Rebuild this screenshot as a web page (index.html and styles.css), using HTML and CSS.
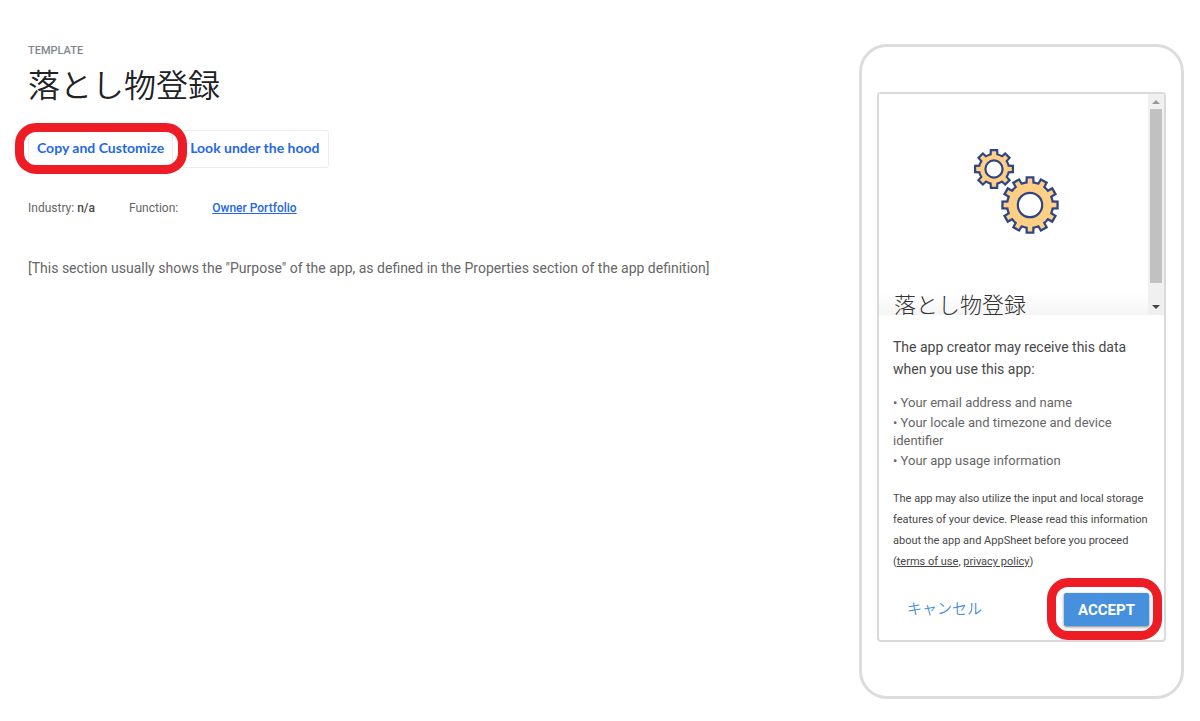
FILE: index.html
```html
<!DOCTYPE html>
<html lang="en">
<head>
<meta charset="utf-8">
<title>落とし物登録</title>
<link rel="stylesheet" href="styles.css">
</head>
<body>
<div class="page">
  <main class="details">
    <p class="eyebrow">TEMPLATE</p>
    <h1 class="title" lang="ja">落とし物登録</h1>
    <div class="actions">
      <button class="action marked" type="button">Copy and Customize</button>
      <button class="action" type="button">Look under the hood</button>
    </div>
    <div class="meta">
      <span>Industry: <b>n/a</b></span>
      <span>Function:</span>
      <a href="#portfolio">Owner Portfolio</a>
    </div>
    <p class="purpose">[This section usually shows the "Purpose" of the app, as defined in the Properties section of the app definition]</p>
  </main>

  <aside class="phone">
    <div class="screen">
      <div class="preview">
        <div class="preview-body">
          <svg class="gears" viewBox="0 0 86 88" width="86" height="88" aria-hidden="true">
            <defs>
              <path id="so" d="M-5 0L-4.2-20H4.2L5 0L4.2 20H-4.2Z"/>
              <path id="si" d="M-3 0L-2.1-17.8H2.1L3 0L2.1 17.8H-2.1Z"/>
              <path id="lo" d="M-5 0L-4.4-28.7H4.4L5 0L4.4 28.7H-4.4Z"/>
              <path id="li" d="M-3 0L-2.2-26.4H2.2L3 0L2.2 26.4H-2.2Z"/>
            </defs>
            <g transform="translate(21 21)">
              <g class="edge"><circle r="16"/><use href="#so"/><use href="#so" transform="rotate(45)"/><use href="#so" transform="rotate(90)"/><use href="#so" transform="rotate(135)"/></g>
              <g class="fill"><circle r="13.9"/><use href="#si"/><use href="#si" transform="rotate(45)"/><use href="#si" transform="rotate(90)"/><use href="#si" transform="rotate(135)"/></g>
              <circle class="hole" r="8.6"/>
            </g>
            <g transform="translate(57 57)">
              <g class="edge"><circle r="24"/><use href="#lo"/><use href="#lo" transform="rotate(30)"/><use href="#lo" transform="rotate(60)"/><use href="#lo" transform="rotate(90)"/><use href="#lo" transform="rotate(120)"/><use href="#lo" transform="rotate(150)"/></g>
              <g class="fill"><circle r="21.8"/><use href="#li"/><use href="#li" transform="rotate(30)"/><use href="#li" transform="rotate(60)"/><use href="#li" transform="rotate(90)"/><use href="#li" transform="rotate(120)"/><use href="#li" transform="rotate(150)"/></g>
              <circle class="hole" r="12.2"/>
            </g>
          </svg>
          <h2 class="app-name" lang="ja">落とし物登録</h2>
        </div>
        <div class="scrollbar" aria-hidden="true">
          <svg class="arrow up" viewBox="0 0 8 4" width="8" height="4"><path d="M4 0L8 4H0Z"/></svg>
          <div class="thumb"></div>
          <svg class="arrow" viewBox="0 0 8 4" width="8" height="4"><path d="M0 0H8L4 4Z"/></svg>
        </div>
      </div>
      <section class="consent">
        <p class="lead">The app creator may receive this data when you use this app:</p>
        <div class="data-list">
          <p>• Your email address and name</p>
          <p>• Your locale and timezone and device identifier</p>
          <p>• Your app usage information</p>
        </div>
        <p class="notice">The app may also utilize the input and local storage features of your device. Please read this information about the app and AppSheet before you proceed (<a href="#terms">terms of use</a>, <a href="#privacy">privacy policy</a>)</p>
        <div class="choices">
          <button class="cancel" type="button" lang="ja">キャンセル</button>
          <button class="accept marked" type="button">ACCEPT</button>
        </div>
      </section>
    </div>
  </aside>
</div>
</body>
</html>
```

FILE: styles.css
```css
* {
  box-sizing: border-box;
}

body {
  margin: 0;
  background: #fff;
  color: #666;
  font-family: Roboto, "Noto Sans CJK JP", sans-serif;
}

p, h1, h2 {
  margin: 0;
}

button {
  font-family: inherit;
  cursor: pointer;
}

.page {
  display: flex;
  align-items: flex-start;
  gap: 24px;
  padding: 44px 16px 20px 28px;
}

.details {
  flex: 1;
  min-width: 0;
}

.eyebrow {
  color: #80868b;
  font-size: 11px;
  font-weight: 500;
  line-height: 14px;
}

.title {
  margin-top: 6px;
  color: #202124;
  font-size: 32px;
  font-weight: 350;
  line-height: 44px;
}

.actions {
  display: flex;
  gap: 8px;
  margin-top: 22px;
}

.action {
  height: 38px;
  padding: 0 8px 4px;
  border: 1px solid #ececee;
  border-radius: 3px;
  background: #fff;
  color: #2468e5;
  font-family: Lato, sans-serif;
  font-size: 14px;
  font-weight: 700;
}

.marked {
  position: relative;
}

.marked::after {
  content: "";
  position: absolute;
  inset: -8px -15px -7px -14px;
  border: 9px solid #ee1c25;
  border-radius: 21px;
  pointer-events: none;
}

.meta {
  display: flex;
  flex-wrap: wrap;
  gap: 34px;
  margin-top: 32px;
  font-size: 12px;
  line-height: 16px;
}

.meta b {
  font-weight: 500;
  color: #484848;
}

.meta a {
  color: #2468e5;
  font-weight: 500;
}

.purpose {
  margin-top: 42px;
  font-size: 14px;
  line-height: 20px;
}

.phone {
  width: 325px;
  padding: 45px 15px 54px;
  border: 3px solid #dcdcdc;
  border-radius: 28px;
}

.screen {
  border: 2px solid #dadada;
  border-radius: 4px;
}

.preview {
  display: flex;
  height: 221px;
  overflow: hidden;
}

.preview-body {
  flex: 1;
  display: flex;
  flex-direction: column;
  padding: 54px 11px 0 15px;
  background: linear-gradient(#fff 90%, #f4f4f4);
}

.gears {
  flex: none;
  align-self: center;
}

.edge {
  fill: #2f4584;
}

.fill {
  fill: #ffcf85;
}

.hole {
  fill: #fff;
  stroke: #2f4584;
  stroke-width: 2.2;
}

.app-name {
  margin-top: 54px;
  color: #333;
  font-size: 22px;
  font-weight: 300;
  line-height: 32px;
}

.scrollbar {
  display: flex;
  flex-direction: column;
  align-items: center;
  width: 16px;
  padding: 6px 2px;
  background: #f0f0f0;
}

.thumb {
  width: 12px;
  height: 174px;
  margin: 5px 0 auto;
  background: #c1c1c1;
}

.arrow {
  fill: #444;
}

.arrow.up {
  fill: #999;
}

.consent {
  padding: 21px 14px 14px;
}

.lead {
  padding-right: 12px;
  color: #484848;
  font-size: 14px;
  line-height: 22px;
}

.data-list {
  display: grid;
  gap: 2px;
  margin-top: 14px;
  font-size: 13px;
  line-height: 18px;
}

.notice {
  margin-top: 18px;
  color: #484848;
  font-size: 11px;
  line-height: 21px;
}

.notice a {
  color: inherit;
}

.choices {
  display: flex;
  align-items: flex-start;
  justify-content: space-between;
  margin-top: 21px;
  padding-right: 1px;
}

.cancel {
  height: 29px;
  padding: 0 14px;
  border: 0;
  background: none;
  color: #4790de;
  font-size: 15px;
  font-weight: 350;
}

.accept {
  height: 33px;
  padding: 0 14px;
  border: 0;
  border-radius: 2px;
  background: #4790de;
  box-shadow: 0 1px 3px rgba(0, 0, 0, 0.5);
  color: #fff;
  font-size: 15px;
  font-weight: 700;
}

.accept::after {
  inset: -15px -13px -14px -17px;
}
```
